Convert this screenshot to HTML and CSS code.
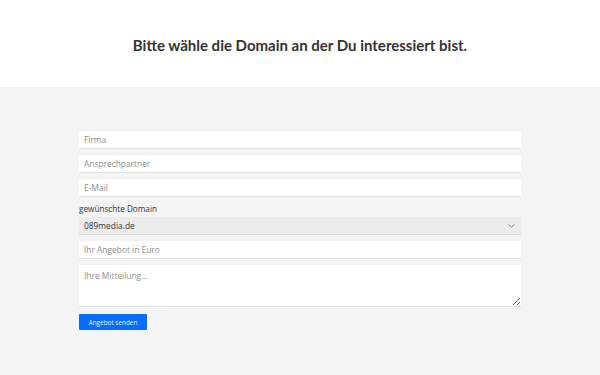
FILE: index.html
```html
<!DOCTYPE html>
<html lang="de">
<head>
<meta charset="utf-8">
<title>Domain Angebot</title>
<link rel="stylesheet" href="styles.css">
</head>
<body>
<header class="top">
  <h1 class="title">Bitte wähle die Domain an der Du interessiert bist.</h1>
</header>
<section class="panel">
  <form class="form">
    <input class="field" type="text" placeholder="Firma">
    <input class="field" type="text" placeholder="Ansprechpartner">
    <input class="field" type="email" placeholder="E-Mail">
    <div class="group">
      <label class="label" for="domain">gewünschte Domain</label>
      <div class="select-wrap">
        <select class="select" id="domain">
          <option>089media.de</option>
        </select>
        <svg class="chevron" width="7" height="4" viewBox="0 0 7 4"><path d="M0.5 0.5 L3.5 3.2 L6.5 0.5" fill="none" stroke="#8a8a8a" stroke-width="1"/></svg>
      </div>
    </div>
    <input class="field" type="text" placeholder="Ihr Angebot in Euro">
    <textarea class="area" placeholder="Ihre Mitteilung..."></textarea>
    <div class="actions"><button class="btn" type="button">Angebot senden</button></div>
  </form>
</section>
</body>
</html>
```
FILE: styles.css
```css
html, body {
  margin: 0;
  padding: 0;
  height: 100%;
}
body {
  font-family: "Open Sans", "Liberation Sans", sans-serif;
  background: #f4f4f4;
}
.top {
  height: 87px;
  background: #ffffff;
  display: flex;
  align-items: center;
  justify-content: center;
}
.title {
  margin: 0;
  font-family: "Lato", "Open Sans", sans-serif;
  font-weight: 700;
  font-size: 15px;
  color: #333333;
  padding-top: 3px;
}
.panel {
  background: #f4f4f4;
  padding: 44px 79px 40px;
}
.form {
  display: flex;
  flex-direction: column;
  gap: 6px;
}
.field, .select, .area {
  box-sizing: border-box;
  width: 100%;
  border: none;
  border-bottom: 1px solid #e3e3e3;
  border-radius: 0;
  font-family: "Open Sans", sans-serif;
  font-size: 8.4px;
  color: #555;
  outline: none;
  margin: 0;
  display: block;
}
.field {
  height: 18px;
  padding: 0 5px;
  background: #ffffff;
}
.field::placeholder, .area::placeholder {
  color: #8d8d8d;
}
.group {
  display: flex;
  flex-direction: column;
  gap: 3px;
}
.label {
  font-size: 8.2px;
  color: #333;
  line-height: 11px;
}
.select-wrap {
  position: relative;
  height: 18px;
}
.select {
  -webkit-appearance: none;
  appearance: none;
  height: 18px;
  padding: 0 5px;
  background: #ececec;
  color: #333;
  border-bottom: 1px solid #dadada;
}
.chevron {
  position: absolute;
  right: 6px;
  top: 7px;
}
.area {
  height: 42px;
  padding: 5px;
  background: #ffffff;
  resize: both;
}
.actions {
  margin-top: 1px;
  display: flex;
}
.btn {
  width: 68px;
  height: 16px;
  border: none;
  border-radius: 1px;
  background: #0a6cff;
  color: #e8f0ff;
  font-family: "Open Sans", sans-serif;
  font-size: 6.4px;
  padding: 0;
  cursor: pointer;
}
```
